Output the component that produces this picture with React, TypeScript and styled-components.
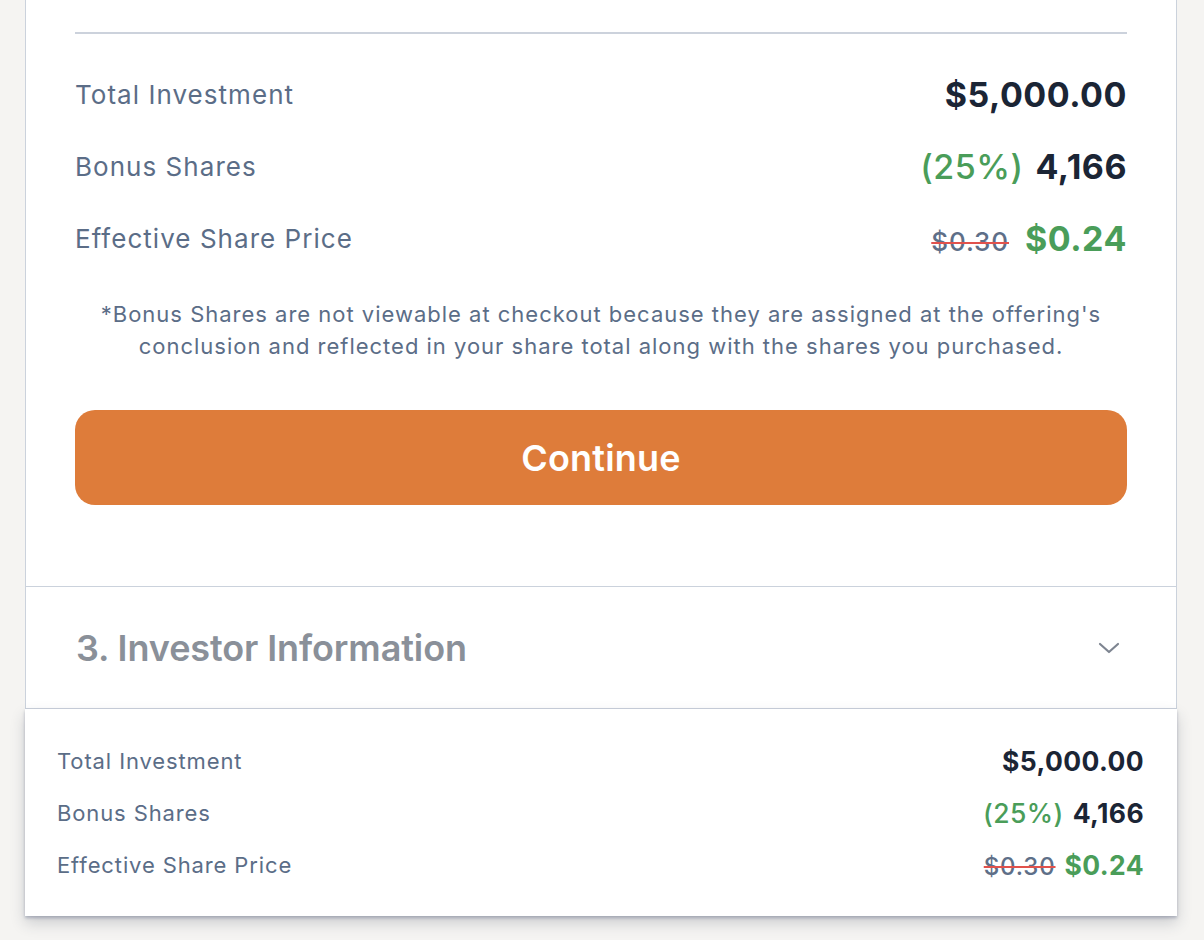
import React from "react";
import styled, { createGlobalStyle } from "styled-components";

const GlobalStyle = createGlobalStyle`
  html, body {
    margin: 0;
    padding: 0;
    background: #f5f4f2;
    font-family: Inter, "Noto Sans", sans-serif;
    overflow: hidden;
  }
  * { box-sizing: border-box; }
`;

const Page = styled.div`
  width: 1204px;
  height: 940px;
  padding: 0 27px 0 25px;
  display: flex;
  flex-direction: column;
`;

const Card = styled.div`
  background: #fff;
  border-style: solid;
  border-color: #cbd2dc;
  border-width: 0 1.5px 1.5px 1.5px;
  display: flex;
  flex-direction: column;
`;

const Section = styled.div`
  padding: 32px 49px 81px 49px;
  border-bottom: 1.5px solid #cbd2dc;
  display: flex;
  flex-direction: column;
`;

const Divider = styled.div`
  height: 2px;
  background: #ccd2dc;
  margin-bottom: 24px;
`;

const Row = styled.div<{ $h: number }>`
  height: ${(p) => p.$h}px;
  display: flex;
  align-items: center;
  justify-content: space-between;
`;

const Label = styled.span<{ $size: number }>`
  font-size: ${(p) => p.$size}px;
  color: #5b6d87;
  letter-spacing: 0.04em;
`;

const Value = styled.span<{ $size: number; $gap: number }>`
  font-size: ${(p) => p.$size}px;
  font-weight: 700;
  color: #1b2535;
  display: flex;
  align-items: baseline;
  gap: ${(p) => p.$gap}px;
  letter-spacing: 0.015em;
`;

const Green = styled.span<{ $weight?: number }>`
  color: #4a9d59;
  font-weight: ${(p) => p.$weight ?? 700};
`;

const Strike = styled.span<{ $size: number; $extra: number }>`
  font-size: ${(p) => p.$size}px;
  font-weight: 500;
  color: #5e6f88;
  letter-spacing: 0.035em;
  margin-right: ${(p) => p.$extra}px;
  text-decoration: line-through;
  text-decoration-color: #e1524c;
  text-decoration-thickness: 2px;
`;

const Note = styled.p`
  margin: 24px 0 0 0;
  font-size: 22px;
  line-height: 32px;
  color: #5b6d87;
  text-align: center;
  letter-spacing: 0.045em;
`;

const Button = styled.button`
  margin-top: 48px;
  height: 95px;
  border: none;
  border-radius: 20px;
  background: #de7c3a;
  color: #fff;
  font-family: inherit;
  font-size: 36px;
  font-weight: 600;
  letter-spacing: 0.005em;
  cursor: pointer;
`;

const Accordion = styled.div`
  height: 121px;
  padding: 0 50px 0 50px;
  display: flex;
  align-items: center;
  justify-content: space-between;
`;

const AccordionTitle = styled.h2`
  margin: 0;
  font-size: 36px;
  font-weight: 600;
  color: #8a9099;
  letter-spacing: -0.003em;
`;

const Footer = styled.div`
  background: #fff;
  padding: 26px 33px 25px 32px;
  box-shadow: 0 7px 14px rgba(40, 50, 70, 0.2), 0 2px 3px rgba(100, 110, 140, 0.4);
  display: flex;
  flex-direction: column;
`;

function Chevron() {
  return (
    <svg width="22" height="14" viewBox="0 0 22 14" style={{ marginRight: 6 }}>
      <polyline
        points="2,3 11,11 20,3"
        fill="none"
        stroke="#7e8591"
        strokeWidth="2.2"
        strokeLinecap="round"
        strokeLinejoin="round"
      />
    </svg>
  );
}

type SummaryProps = {
  rowH: number;
  label: number;
  value: number;
  strike: number;
  gap: number;
  strikeExtra: number;
};

function Summary({ rowH, label, value, strike, gap, strikeExtra }: SummaryProps) {
  return (
    <>
      <Row $h={rowH}>
        <Label $size={label}>Total Investment</Label>
        <Value $size={value} $gap={gap}>$5,000.00</Value>
      </Row>
      <Row $h={rowH}>
        <Label $size={label}>Bonus Shares</Label>
        <Value $size={value} $gap={gap}>
          <Green $weight={500}>(25%)</Green>
          <span>4,166</span>
        </Value>
      </Row>
      <Row $h={rowH}>
        <Label $size={label}>Effective Share Price</Label>
        <Value $size={value} $gap={gap}>
          <Strike $size={strike} $extra={strikeExtra}>$0.30</Strike>
          <Green>$0.24</Green>
        </Value>
      </Row>
    </>
  );
}

export default function App() {
  return (
    <>
      <GlobalStyle />
      <Page>
        <Card>
          <Section>
            <Divider />
            <Summary rowH={72} label={26} value={34} strike={26} gap={12} strikeExtra={4} />
            <Note>
              *Bonus Shares are not viewable at checkout because they are assigned at the offering's
              <br />
              conclusion and reflected in your share total along with the shares you purchased.
            </Note>
            <Button>Continue</Button>
          </Section>
          <Accordion>
            <AccordionTitle>3. Investor Information</AccordionTitle>
            <Chevron />
          </Accordion>
        </Card>
        <Footer>
          <Summary rowH={52} label={22} value={26.5} strike={24} gap={9} strikeExtra={0} />
        </Footer>
      </Page>
    </>
  );
}
